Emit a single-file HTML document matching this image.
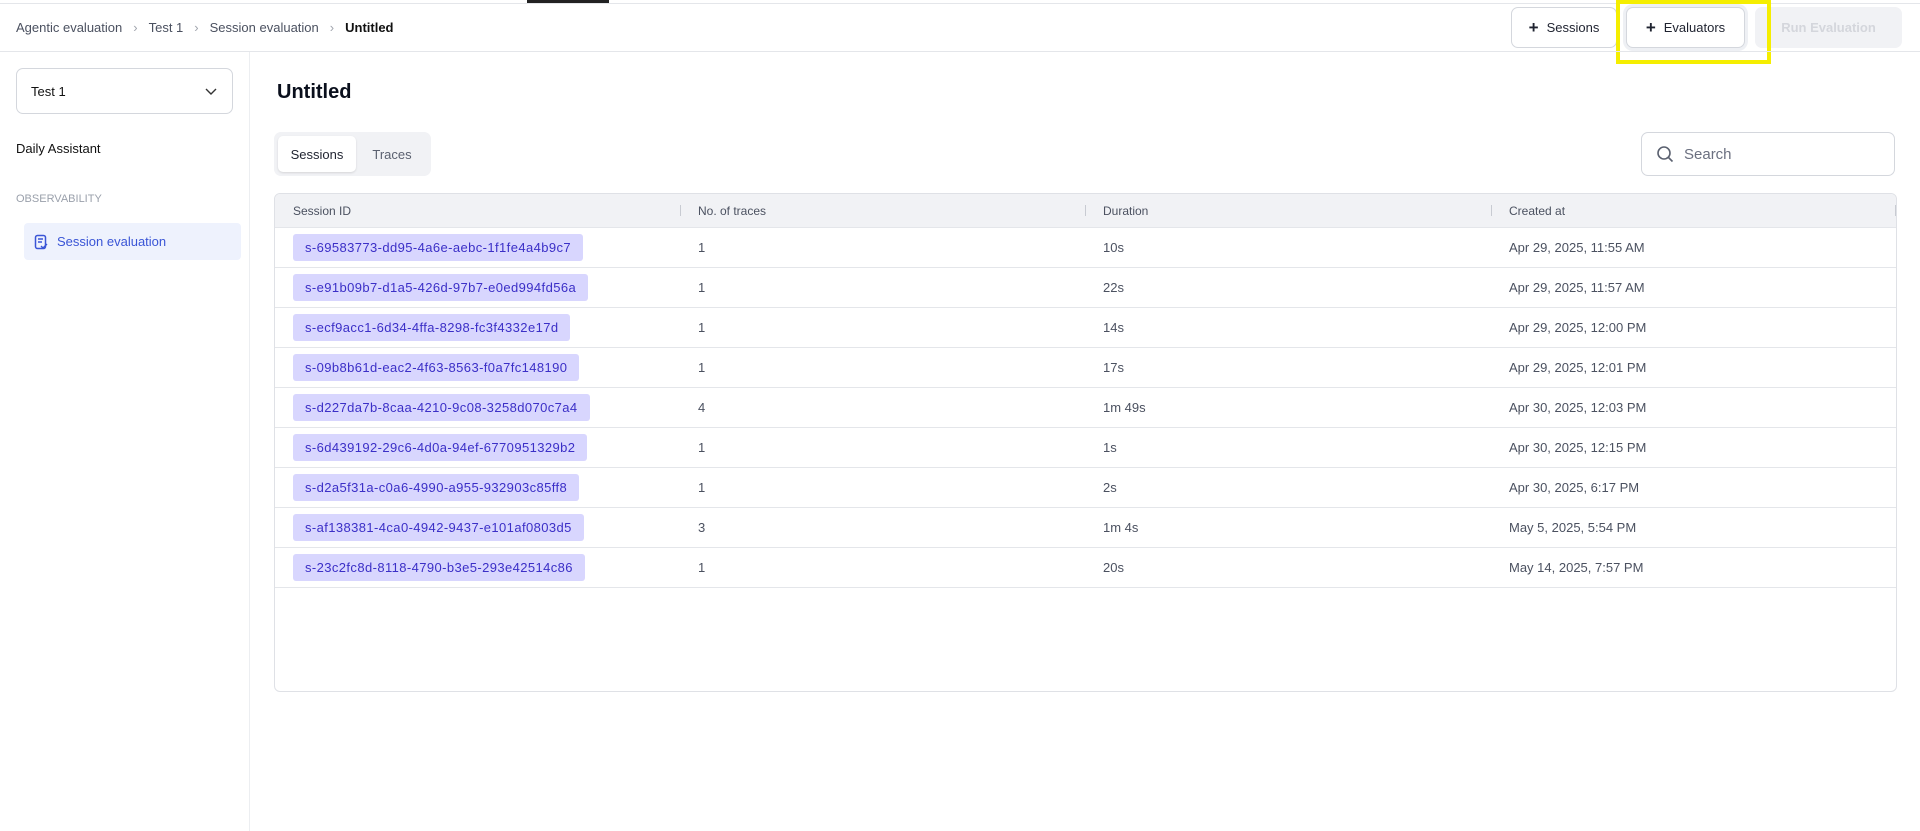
<!DOCTYPE html>
<html><head><meta charset="utf-8"><style>
*{box-sizing:border-box;margin:0;padding:0}
body{width:1920px;height:831px;overflow:hidden;background:#fff;font-family:"Liberation Sans",sans-serif;color:#1f2330;font-size:13px;position:relative}
.abs{position:absolute}
.topline{left:0;top:3px;width:1920px;height:1px;background:#e4e6ea}
.header{left:0;top:51px;width:1920px;height:1px;background:#e4e6ea}
.crumb{left:16px;top:20px;color:#4b5160;font-size:13px;white-space:nowrap}
.crumb span.sep{color:#a0a4ad;margin:0 11px}
.crumb b{color:#111;font-weight:bold}
.btn{top:7px;height:41px;border:1px solid #d4d7dd;border-radius:7px;background:#fff;font-size:13px;color:#1f2330;display:flex;align-items:center;justify-content:center;gap:8px}
.btn .p{font-size:17px;font-weight:bold}
.side{left:249px;top:52px;width:1px;height:779px;background:#eceef1}
.select{left:16px;top:68px;width:217px;height:46px;border:1px solid #d4d7dd;border-radius:7px;padding:0 14px 0 14px;display:flex;align-items:center;justify-content:space-between;font-size:13px;color:#111}
.nav{left:24px;top:223px;width:217px;height:37px;background:#eef2fd;border-radius:4px;color:#3a55d6;font-size:13px;display:flex;align-items:center;padding-left:10px;gap:9px}
.title{left:277px;top:81px;font-size:20px;font-weight:bold;color:#0a0f1c}
.tabs{left:274px;top:132px;width:157px;height:44px;background:#f1f2f5;border-radius:7px}
.tab1{left:278px;top:136px;width:78px;height:36px;background:#fff;border-radius:5px;box-shadow:0 1px 2px rgba(0,0,0,.12);display:flex;align-items:center;justify-content:center;color:#1f2330}
.tab2{left:356px;top:136px;width:72px;height:36px;display:flex;align-items:center;justify-content:center;color:#5b6170}
.search{left:1641px;top:132px;width:254px;height:44px;border:1px solid #d4d7dd;border-radius:7px;display:flex;align-items:center;padding-left:14px;gap:10px;color:#6b7080;font-size:15px}
.table{left:274px;top:193px;width:1623px;height:499px;border:1px solid #dfe1e6;border-radius:6px;overflow:hidden}
.thead{height:34px;background:#f1f2f5;border-bottom:1px solid #e4e6ea;position:relative;font-size:12px;color:#4b5160}
.thead div{position:absolute;top:10px}
.thead i{position:absolute;top:11px;width:1px;height:11px;background:#c8cbd2}
.row{height:40px;border-bottom:1px solid #e4e6ea;position:relative;color:#4b5160}
.row div{position:absolute;top:12px}
.row .pill{top:6px;left:18px;height:27px;background:#d8d6fe;color:#3b2fc7;border-radius:3px;padding:0 12px;line-height:27px;white-space:nowrap;letter-spacing:0.4px}
.yel{left:1616px;top:0;width:155px;height:64px;border:4px solid #f5ee00}
</style></head><body>
<div class="abs topline"></div>
<div class="abs" style="left:527px;top:0;width:82px;height:3px;background:#222"></div>
<div class="abs crumb">Agentic evaluation<span class="sep">›</span>Test 1<span class="sep">›</span>Session evaluation<span class="sep">›</span><b>Untitled</b></div>
<div class="abs btn" style="left:1511px;width:106px"><span class="p">+</span>Sessions</div>
<div class="abs btn" style="left:1626px;width:119px;box-shadow:0 0 0 3px #eef0f4"><span class="p">+</span>Evaluators</div>
<div class="abs btn" style="left:1755px;width:147px;background:#f1f2f5;border-color:#f1f2f5;color:#d4d6dc;font-weight:bold">Run Evaluation</div>
<div class="abs yel"></div>
<div class="abs header"></div>
<div class="abs side"></div>
<div class="abs select">Test 1<svg width="14" height="14" viewBox="0 0 14 14"><path d="M2 5l5 5 5-5" fill="none" stroke="#333" stroke-width="1.4"/></svg></div>
<div class="abs" style="left:16px;top:141px;color:#111">Daily Assistant</div>
<div class="abs" style="left:16px;top:193px;color:#9aa0ab;font-size:11px">OBSERVABILITY</div>
<div class="abs nav"><svg width="14" height="16" viewBox="0 0 14 16"><rect x="1.5" y="1.5" width="10" height="13" rx="2" fill="none" stroke="#3a55d6" stroke-width="1.5"/><path d="M4 5h5M4 8h4" stroke="#3a55d6" stroke-width="1.4"/><path d="M7 12l2 2 4-4" fill="none" stroke="#3a55d6" stroke-width="1.4"/></svg>Session evaluation</div>
<div class="abs title">Untitled</div>
<div class="abs tabs"></div>
<div class="abs tab1">Sessions</div>
<div class="abs tab2">Traces</div>
<div class="abs search"><svg width="18" height="18" viewBox="0 0 18 18"><circle cx="8" cy="8" r="6" fill="none" stroke="#5b6170" stroke-width="1.6"/><path d="M12.5 12.5l4 4" stroke="#5b6170" stroke-width="1.6"/></svg>Search</div>
<div class="abs table">
<div class="thead"><div style="left:18px">Session ID</div><i style="left:405px"></i><div style="left:423px">No. of traces</div><i style="left:810px"></i><div style="left:828px">Duration</div><i style="left:1216px"></i><div style="left:1234px">Created at</div><i style="left:1620px"></i></div>
<div class="row"><div class="pill">s-69583773-dd95-4a6e-aebc-1f1fe4a4b9c7</div><div style="left:423px">1</div><div style="left:828px">10s</div><div style="left:1234px">Apr 29, 2025, 11:55 AM</div></div>
<div class="row"><div class="pill">s-e91b09b7-d1a5-426d-97b7-e0ed994fd56a</div><div style="left:423px">1</div><div style="left:828px">22s</div><div style="left:1234px">Apr 29, 2025, 11:57 AM</div></div>
<div class="row"><div class="pill">s-ecf9acc1-6d34-4ffa-8298-fc3f4332e17d</div><div style="left:423px">1</div><div style="left:828px">14s</div><div style="left:1234px">Apr 29, 2025, 12:00 PM</div></div>
<div class="row"><div class="pill">s-09b8b61d-eac2-4f63-8563-f0a7fc148190</div><div style="left:423px">1</div><div style="left:828px">17s</div><div style="left:1234px">Apr 29, 2025, 12:01 PM</div></div>
<div class="row"><div class="pill">s-d227da7b-8caa-4210-9c08-3258d070c7a4</div><div style="left:423px">4</div><div style="left:828px">1m 49s</div><div style="left:1234px">Apr 30, 2025, 12:03 PM</div></div>
<div class="row"><div class="pill">s-6d439192-29c6-4d0a-94ef-6770951329b2</div><div style="left:423px">1</div><div style="left:828px">1s</div><div style="left:1234px">Apr 30, 2025, 12:15 PM</div></div>
<div class="row"><div class="pill">s-d2a5f31a-c0a6-4990-a955-932903c85ff8</div><div style="left:423px">1</div><div style="left:828px">2s</div><div style="left:1234px">Apr 30, 2025, 6:17 PM</div></div>
<div class="row"><div class="pill">s-af138381-4ca0-4942-9437-e101af0803d5</div><div style="left:423px">3</div><div style="left:828px">1m 4s</div><div style="left:1234px">May 5, 2025, 5:54 PM</div></div>
<div class="row"><div class="pill">s-23c2fc8d-8118-4790-b3e5-293e42514c86</div><div style="left:423px">1</div><div style="left:828px">20s</div><div style="left:1234px">May 14, 2025, 7:57 PM</div></div>
</div>
</body></html>
